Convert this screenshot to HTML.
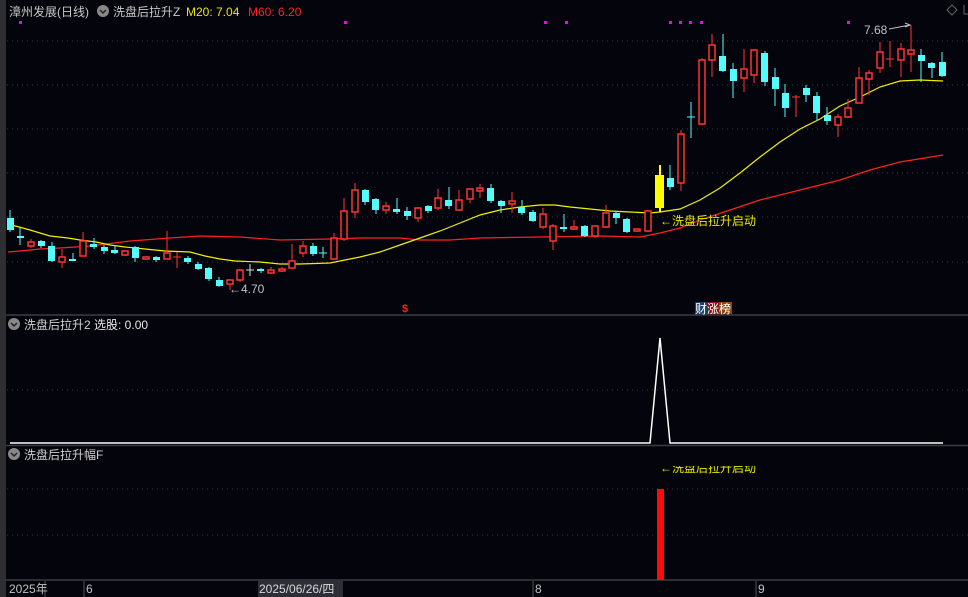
<!DOCTYPE html>
<html><head><meta charset="utf-8"><style>
html,body{margin:0;padding:0;background:#04040c;width:968px;height:597px;overflow:hidden;font-family:"Liberation Sans","Noto Sans CJK SC",sans-serif}
svg{display:block}
.rw{stroke:#ff3333;stroke-width:1;fill:none}
.r{fill:#04040c;stroke:#ff3333;stroke-width:1.5}
.cw{stroke:#54fcfc;stroke-width:1;fill:none}
.c{fill:#54fcfc}
.g{stroke:#3a3a44;stroke-dasharray:1 4;stroke-width:1}
text{font-family:"Liberation Sans","Noto Sans CJK SC",sans-serif}
</style></head><body>
<svg width="968" height="597" viewBox="0 0 968 597" xmlns="http://www.w3.org/2000/svg">
<rect width="968" height="597" fill="#04040c"/>
<rect x="0" y="0" width="6" height="597" fill="#2e2e33"/>
<g class="g">
<line x1="7" y1="41" x2="968" y2="41"/><line x1="7" y1="85" x2="968" y2="85"/><line x1="7" y1="129" x2="968" y2="129"/>
<line x1="7" y1="173" x2="968" y2="173"/><line x1="7" y1="217" x2="968" y2="217"/><line x1="7" y1="262" x2="968" y2="262"/>
<line x1="7" y1="390" x2="968" y2="390"/><line x1="7" y1="489" x2="968" y2="489"/><line x1="7" y1="535" x2="968" y2="535"/>
</g>
<line x1="6" y1="315" x2="968" y2="315" stroke="#3c3c44" stroke-width="1.5"/>
<line x1="6" y1="445.5" x2="968" y2="445.5" stroke="#3c3c44" stroke-width="1.5"/>
<line x1="6" y1="580" x2="968" y2="580" stroke="#3c3c44" stroke-width="1.5"/>
<text x="9" y="16" font-size="12" fill="#c8c8c8">漳州发展(日线)</text>
<circle cx="103" cy="11" r="6" fill="#888"/><path d="M100 10 L103 13 L106 10" stroke="#222" stroke-width="1.5" fill="none"/>
<text x="113" y="16" font-size="12" fill="#c8c8c8">洗盘后拉升Z</text>
<text x="186" y="16" font-size="12" fill="#e8e800">M20: 7.04</text>
<text x="248" y="16" font-size="12" fill="#ff2020">M60: 6.20</text>
<path d="M947 10 L952 5 L957 10 L952 15 Z" stroke="#666" fill="none"/>
<path d="M964 5 V14 H968" stroke="#666" fill="none"/>
<g fill="#e010e0">
<rect x="19" y="21" width="3" height="3"/><rect x="344" y="21" width="3" height="3"/><rect x="544" y="21" width="3" height="3"/><rect x="565" y="21" width="3" height="3"/>
<rect x="669" y="21" width="3" height="3"/><rect x="679" y="21" width="3" height="3"/><rect x="689" y="21" width="3" height="3"/><rect x="700" y="21" width="3" height="3"/><rect x="847" y="21" width="3" height="3"/>
</g>
<polyline fill="none" stroke="#ff2020" stroke-width="1.2" points="8,252 20,251 40,249 60,248 90,246 130,241 170,238 200,236 240,237 280,240 330,239 360,238 400,238 420,240 450,240 480,238 540,237 600,236 640,237 660,233 680,228 700,220 730,210 760,200 800,190 840,180 870,170 900,162 943,155"/>
<polyline fill="none" stroke="#f0f000" stroke-width="1.2" points="8,224 30,230 50,236 68,238 80,240 96,242 110,245 125,247 145,249 165,251 190,252 205,256 220,259 235,261 260,262 280,264 300,264 330,263 345,260 360,257 380,252 400,245 420,238 440,231 460,223 480,215 500,210 520,207 540,205 555,205 570,207 590,209 610,211 630,212 650,213 660,212 680,209 700,200 720,188 740,173 760,157 780,142 800,129 820,119 840,106 860,97 880,87 900,81 920,80 943,81"/>
<g>
<path class="cw" d="M10 210V232"/><rect class="c" x="7" y="218" width="7" height="12"/>
<path class="cw" d="M20 228V245"/><rect class="c" x="17" y="236" width="7" height="2"/>
<path class="rw" d="M31 239V248"/><rect class="r" x="28" y="242" width="6" height="4"/>
<path class="cw" d="M41 240V248"/><rect class="c" x="38" y="241" width="7" height="5"/>
<path class="cw" d="M52 242V262"/><rect class="c" x="48" y="246" width="7" height="15"/>
<path class="rw" d="M62 249V268"/><rect class="r" x="59" y="257" width="6" height="5"/>
<path class="cw" d="M73 253V261"/><rect class="c" x="69" y="259" width="7" height="2"/>
<path class="rw" d="M83 232V256"/><rect class="r" x="80" y="241" width="6" height="15"/>
<path class="cw" d="M94 238V249"/><rect class="c" x="90" y="244" width="7" height="3"/>
<path class="cw" d="M104 245V254"/><rect class="c" x="101" y="247" width="7" height="4"/>
<path class="cw" d="M115 246V254"/><rect class="c" x="111" y="250" width="7" height="3"/>
<path class="rw" d="M125 250V256"/><rect class="r" x="122" y="251" width="6" height="4"/>
<path class="cw" d="M135 246V262"/><rect class="c" x="132" y="247" width="7" height="11"/>
<path class="rw" d="M146 256V260"/><rect class="r" x="143" y="257" width="6" height="2"/>
<path class="cw" d="M156 256V262"/><rect class="c" x="153" y="257" width="7" height="3"/>
<path class="rw" d="M167 231V259"/><rect class="r" x="164" y="253" width="6" height="6"/>
<path class="rw" d="M177 252V268M173 257H181"/>
<path class="cw" d="M188 256V264"/><rect class="c" x="184" y="258" width="7" height="4"/>
<path class="cw" d="M198 262V270"/><rect class="c" x="195" y="264" width="7" height="5"/>
<path class="cw" d="M209 267V281"/><rect class="c" x="205" y="268" width="7" height="11"/>
<path class="cw" d="M219 277V287"/><rect class="c" x="216" y="280" width="7" height="6"/>
<path class="rw" d="M230 279V290"/><rect class="r" x="227" y="280" width="6" height="4"/>
<path class="rw" d="M240 269V282"/><rect class="r" x="237" y="270" width="6" height="10"/>
<path d="M250 264V276M246 270H254" stroke="#ddd"/>
<path class="cw" d="M261 268V273"/><rect class="c" x="257" y="269" width="7" height="2"/>
<path class="rw" d="M271 267V274"/><rect class="r" x="268" y="270" width="6" height="3"/>
<path class="rw" d="M282 267V272"/><rect class="r" x="279" y="269" width="6" height="2"/>
<path class="rw" d="M292 244V268"/><rect class="r" x="289" y="261" width="6" height="7"/>
<path class="rw" d="M303 241V257"/><rect class="r" x="300" y="246" width="6" height="7"/>
<path class="cw" d="M313 243V256"/><rect class="c" x="310" y="246" width="7" height="8"/>
<path class="cw" d="M323 247V258M319 253H327" />
<path class="rw" d="M334 233V260"/><rect class="r" x="331" y="238" width="6" height="21"/>
<path class="rw" d="M344 198V241"/><rect class="r" x="341" y="211" width="6" height="28"/>
<path class="rw" d="M355 183V218"/><rect class="r" x="352" y="190" width="6" height="22"/>
<path class="cw" d="M365 189V205"/><rect class="c" x="362" y="190" width="7" height="12"/>
<path class="cw" d="M376 198V214"/><rect class="c" x="372" y="199" width="7" height="11"/>
<path class="rw" d="M386 202V214"/><rect class="r" x="383" y="206" width="6" height="4"/>
<path class="cw" d="M397 198V214"/><rect class="c" x="393" y="209" width="7" height="3"/>
<path class="cw" d="M407 207V220"/><rect class="c" x="404" y="211" width="7" height="5"/>
<path class="rw" d="M418 207V222"/><rect class="r" x="415" y="208" width="6" height="10"/>
<path class="cw" d="M428 205V213"/><rect class="c" x="425" y="206" width="7" height="5"/>
<path class="rw" d="M438 189V210"/><rect class="r" x="435" y="198" width="6" height="10"/>
<path class="cw" d="M449 187V209"/><rect class="c" x="445" y="200" width="7" height="6"/>
<path class="rw" d="M459 190V211"/><rect class="r" x="456" y="200" width="6" height="10"/>
<path class="rw" d="M470 188V203"/><rect class="r" x="467" y="189" width="6" height="10"/>
<path class="rw" d="M480 184V198"/><rect class="r" x="477" y="188" width="6" height="3"/>
<path class="cw" d="M491 184V203"/><rect class="c" x="487" y="188" width="7" height="13"/>
<path class="cw" d="M501 200V213"/><rect class="c" x="498" y="201" width="7" height="5"/>
<path class="rw" d="M512 192V213"/><rect class="r" x="509" y="201" width="6" height="3"/>
<path class="cw" d="M522 200V215"/><rect class="c" x="518" y="207" width="7" height="6"/>
<path class="cw" d="M533 210V222"/><rect class="c" x="529" y="212" width="7" height="9"/>
<path class="rw" d="M543 208V229"/><rect class="r" x="540" y="214" width="6" height="13"/>
<path class="rw" d="M553 224V250"/><rect class="r" x="550" y="226" width="6" height="15"/>
<path class="cw" d="M564 214V232"/><rect class="c" x="560" y="227" width="7" height="2"/>
<path class="rw" d="M574 220V230"/><rect class="r" x="571" y="227" width="6" height="2"/>
<path class="cw" d="M585 225V237"/><rect class="c" x="581" y="226" width="7" height="10"/>
<path class="rw" d="M595 225V238"/><rect class="r" x="592" y="226" width="6" height="10"/>
<path class="rw" d="M606 205V228"/><rect class="r" x="603" y="213" width="6" height="14"/>
<path class="cw" d="M616 212V224"/><rect class="c" x="613" y="213" width="7" height="5"/>
<path class="cw" d="M627 218V233"/><rect class="c" x="623" y="219" width="7" height="13"/>
<path class="rw" d="M637 229V232"/><rect class="r" x="634" y="229" width="6" height="2"/>
<path class="rw" d="M648 210V232"/><rect class="r" x="645" y="211" width="6" height="20"/>
<path d="M660 165V212" stroke="#ffff00" stroke-width="2"/><rect x="655" y="175" width="9" height="33" fill="#ffff00"/>
<path class="cw" d="M670 165V190"/><rect class="c" x="667" y="178" width="7" height="9"/>
<path class="rw" d="M681 130V191"/><rect class="r" x="678" y="134" width="6" height="49"/>
<path class="cw" d="M691 102V138M687 117H695"/>
<path class="rw" d="M702 58V125"/><rect class="r" x="699" y="60" width="6" height="64"/>
<path class="rw" d="M712 34V77"/><rect class="r" x="709" y="45" width="6" height="15"/>
<path class="cw" d="M723 34V72"/><rect class="c" x="719" y="56" width="7" height="15"/>
<path class="cw" d="M733 63V98"/><rect class="c" x="730" y="69" width="7" height="12"/>
<path class="rw" d="M744 49V92"/><rect class="r" x="741" y="69" width="6" height="9"/>
<path class="rw" d="M754 49V83"/><rect class="r" x="751" y="50" width="6" height="25"/>
<path class="cw" d="M765 51V86"/><rect class="c" x="761" y="53" width="7" height="29"/>
<path class="cw" d="M775 68V106"/><rect class="c" x="772" y="77" width="7" height="12"/>
<path class="cw" d="M785 84V117"/><rect class="c" x="782" y="93" width="7" height="15"/>
<path class="rw" d="M796 95V117M792 97H800"/>
<path class="cw" d="M806 85V102"/><rect class="c" x="803" y="88" width="7" height="7"/>
<path class="cw" d="M817 92V121"/><rect class="c" x="813" y="96" width="7" height="17"/>
<path class="cw" d="M827 107V125"/><rect class="c" x="824" y="115" width="7" height="6"/>
<path class="rw" d="M838 114V137"/><rect class="r" x="835" y="117" width="6" height="8"/>
<path class="rw" d="M848 99V118"/><rect class="r" x="845" y="108" width="6" height="9"/>
<path class="rw" d="M859 67V103"/><rect class="r" x="856" y="78" width="6" height="25"/>
<path class="rw" d="M869 70V95"/><rect class="r" x="866" y="73" width="6" height="6"/>
<path class="rw" d="M880 42V73"/><rect class="r" x="877" y="52" width="6" height="16"/>
<path class="rw" d="M890 41V67M886 59H894" stroke-width="2"/>
<path class="rw" d="M901 43V77"/><rect class="r" x="898" y="49" width="6" height="11"/>
<path class="rw" d="M911 25V72"/><rect class="r" x="908" y="50" width="6" height="4"/>
<path class="cw" d="M921 49V82"/><rect class="c" x="918" y="55" width="7" height="6"/>
<path class="cw" d="M932 62V78"/><rect class="c" x="928" y="63" width="7" height="5"/>
<path class="cw" d="M942 52V77"/><rect class="c" x="939" y="62" width="7" height="14"/>
</g>
<text x="229" y="293" font-size="12" fill="#c0c0c8">←4.70</text>
<text x="864" y="34" font-size="12" fill="#c0c0c8">7.68</text>
<path d="M889 29 L910 25 M905 23 L910 25 L905 27" stroke="#c0c0c8" fill="none"/>
<text x="660" y="225" font-size="12" fill="#e8e800">←洗盘后拉升启动</text>
<text x="402" y="312" font-size="11" fill="#ff2020" font-weight="bold">$</text>
<rect x="695" y="302" width="12" height="12" fill="#16406e"/><rect x="707" y="302" width="12" height="12" fill="#8a1010"/><rect x="719" y="302" width="13" height="12" fill="#8a4810"/>
<text x="695" y="313" font-size="12" fill="#fff">财涨榜</text>
<circle cx="14" cy="324" r="6" fill="#888"/><path d="M11 323 L14 326 L17 323" stroke="#222" stroke-width="1.5" fill="none"/>
<text x="24" y="329" font-size="12" fill="#d0d0d0">洗盘后拉升2 <tspan fill="#e8e8e8">选股: 0.00</tspan></text>
<polyline fill="none" stroke="#fff" stroke-width="1.5" points="10,443 650,443 660,338 670,443 943,443"/>
<circle cx="14" cy="454" r="6" fill="#888"/><path d="M11 453 L14 456 L17 453" stroke="#222" stroke-width="1.5" fill="none"/>
<text x="24" y="459" font-size="12" fill="#d0d0d0">洗盘后拉升幅F</text>
<clipPath id="cp"><rect x="600" y="466" width="300" height="20"/></clipPath>
<text x="660" y="472" font-size="12" fill="#e8e800" clip-path="url(#cp)">←洗盘后拉升启动</text>
<rect x="657" y="489" width="7" height="91" fill="#ff0a0a"/>
<rect x="6" y="581" width="962" height="16" fill="#04040c"/>
<g stroke="#555"><line x1="45" y1="581" x2="45" y2="597"/><line x1="84" y1="581" x2="84" y2="597"/><line x1="288" y1="581" x2="288" y2="584"/><line x1="533" y1="581" x2="533" y2="597"/><line x1="756" y1="581" x2="756" y2="597"/></g>
<rect x="258" y="581" width="85" height="16" fill="#2e2e36"/>
<text x="9" y="593" font-size="12" fill="#c0c0c0">2025年</text>
<text x="86" y="593" font-size="12" fill="#c0c0c0">6</text>
<text x="259" y="593" font-size="12" fill="#d8d8d8">2025/06/26/四</text>
<text x="535" y="593" font-size="12" fill="#c0c0c0">8</text>
<text x="758" y="593" font-size="12" fill="#c0c0c0">9</text>
</svg>
</body></html>
